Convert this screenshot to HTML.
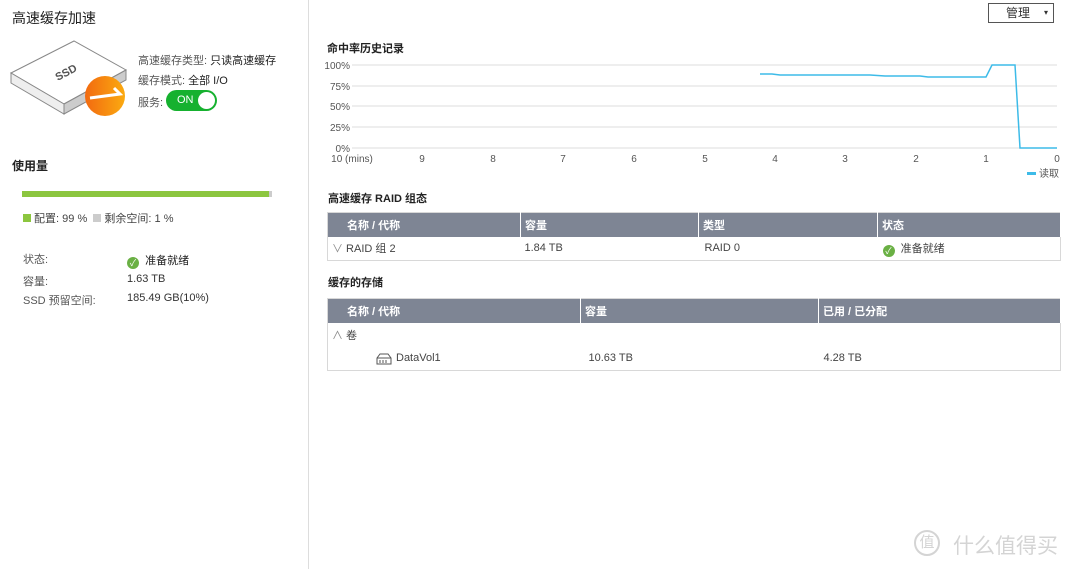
<!DOCTYPE html>
<html><head><meta charset="utf-8"><style>
*{margin:0;padding:0;box-sizing:border-box}
body{width:1080px;height:569px;background:#fff;font-family:"Liberation Sans","Noto Sans CJK SC",sans-serif;color:#333;position:relative;overflow:hidden;font-size:11px}
.a{position:absolute;white-space:nowrap}
table{position:absolute;border-collapse:collapse;left:327px;width:734px;border:1px solid #d8d8d8;table-layout:fixed}
th{background:#7e8594;color:#fff;text-align:left;font-weight:bold;height:24px;font-size:11px;border-right:1px solid #fff}
td{height:24px;font-size:11px;color:#444}
.ok{display:inline-block;width:12px;height:12px;border-radius:50%;background:#6ab044;color:#fff;font-size:9px;text-align:center;line-height:12px;vertical-align:-2px}
</style></head><body>
<div class="a" style="left:12px;top:8px;font-size:14px;color:#222">高速缓存加速</div>
<div class="a" style="left:988px;top:3px;width:66px;height:20px;border:1px solid #555;font-size:12px;line-height:18px;padding-left:17px">管理<span style="position:absolute;right:5px;top:0;font-size:8px;line-height:18px">▾</span></div>
<div class="a" style="left:308px;top:0;width:1px;height:569px;background:#ddd"></div>
<svg class="a" style="left:8px;top:38px" width="120" height="80" viewBox="0 0 120 80">
<polygon points="3,35 66,3 118,32 56,66" fill="#fff" stroke="#888"/>
<polygon points="3,35 56,66 56,76 3,45" fill="#eee" stroke="#888"/>
<polygon points="56,66 118,32 118,42 56,76" fill="#ccc" stroke="#888"/>
<text x="48" y="40" font-size="11" font-weight="bold" fill="#555" transform="rotate(-28 55 38)">SSD</text>
<defs><linearGradient id="g" x1="0" x2="1"><stop offset="0" stop-color="#f26a10"/><stop offset="1" stop-color="#fbaa10"/></linearGradient></defs>
<circle cx="97" cy="58" r="20" fill="url(#g)"/>
<path d="M82 60 L112 56 L106 50" stroke="#fff" stroke-width="3" fill="none"/>
</svg>
<div class="a" style="left:138px;top:52px;color:#555">高速缓存类型: <span style="color:#222">只读高速缓存</span></div>
<div class="a" style="left:138px;top:72px;color:#555">缓存模式: <span style="color:#222">全部 I/O</span></div>
<div class="a" style="left:138px;top:94px;color:#555">服务:</div>
<div class="a" style="left:166px;top:90px;width:51px;height:21px;border-radius:11px;background:#16b12f;color:#fff;font-size:11px;padding:4px 0 0 11px">ON<div style="position:absolute;right:2px;top:2px;width:17px;height:17px;border-radius:50%;background:#fff"></div></div>
<div class="a" style="left:12px;top:157px;font-weight:bold;font-size:12px;color:#222">使用量</div>
<div class="a" style="left:22px;top:191px;width:249px;height:6px;background:#8cc63f"></div>
<div class="a" style="left:269px;top:191px;width:3px;height:6px;background:#ccc"></div>
<div class="a" style="left:23px;top:210px;color:#444"><span style="display:inline-block;width:8px;height:8px;background:#8cc63f"></span> 配置: 99 % &nbsp;<span style="display:inline-block;width:8px;height:8px;background:#ccc"></span> 剩余空间: 1 %</div>
<div class="a" style="left:23px;top:251px;color:#555">状态:</div>
<div class="a" style="left:127px;top:252px;color:#222"><span class="ok">✓</span>&nbsp; 准备就绪</div>
<div class="a" style="left:23px;top:273px;color:#555">容量:</div><div class="a" style="left:127px;top:273px">1.63 TB</div>
<div class="a" style="left:23px;top:292px;color:#555">SSD 预留空间:</div><div class="a" style="left:127px;top:292px">185.49 GB(10%)</div>
<div class="a" style="left:327px;top:40px;font-weight:bold;color:#222">命中率历史记录</div>
<svg class="a" style="left:320px;top:55px" width="760" height="130">
<g stroke="#ddd"><line x1="32" x2="737" y1="10" y2="10"/><line x1="32" x2="737" y1="31" y2="31"/><line x1="32" x2="737" y1="51" y2="51"/><line x1="32" x2="737" y1="72" y2="72"/><line x1="32" x2="737" y1="93" y2="93"/></g>
<g font-size="10" fill="#555" text-anchor="end"><text x="30" y="14">100%</text><text x="30" y="35">75%</text><text x="30" y="55">50%</text><text x="30" y="76">25%</text><text x="30" y="97">0%</text></g>
<g font-size="10" fill="#555" text-anchor="middle"><text x="32" y="107">10 (mins)</text><text x="102" y="107">9</text><text x="173" y="107">8</text><text x="243" y="107">7</text><text x="314" y="107">6</text><text x="385" y="107">5</text><text x="455" y="107">4</text><text x="525" y="107">3</text><text x="596" y="107">2</text><text x="666" y="107">1</text><text x="737" y="107">0</text></g>
<polyline fill="none" stroke="#3dbbe8" stroke-width="1.5" points="440,19 452,19 460,20 550,20 565,21 600,21 608,22 666,22 672,10 695,10 700,93 737,93"/>
<rect x="707" y="117" width="9" height="3" fill="#3dbbe8"/><text x="719" y="122" font-size="10" fill="#555">读取</text>
</svg>
<div class="a" style="left:328px;top:190px;font-weight:bold;color:#222">高速缓存 RAID 组态</div>
<table style="top:212px"><colgroup><col style="width:193px"><col style="width:178px"><col style="width:179px"><col></colgroup>
<tr><th style="padding-left:19px">名称 / 代称</th><th style="padding-left:4px">容量</th><th style="padding-left:4px">类型</th><th style="padding-left:4px">状态</th></tr>
<tr><td style="padding-left:4px"><span style="color:#888">∨</span> RAID 组 2</td><td style="padding-left:4px">1.84 TB</td><td style="padding-left:6px">RAID 0</td><td style="padding-left:5px"><span class="ok">✓</span> &nbsp;准备就绪</td></tr></table>
<div class="a" style="left:328px;top:274px;font-weight:bold;color:#222">缓存的存储</div>
<table style="top:298px"><colgroup><col style="width:253px"><col style="width:238px"><col></colgroup>
<tr><th style="padding-left:19px">名称 / 代称</th><th style="padding-left:4px">容量</th><th style="padding-left:4px">已用 / 已分配</th></tr>
<tr><td colspan="3" style="padding-left:4px"><span style="color:#888">∧</span> 卷</td></tr>
<tr><td style="padding-left:68px">DataVol1</td><td style="padding-left:8px">10.63 TB</td><td style="padding-left:5px">4.28 TB</td></tr></table>
<svg class="a" style="left:376px;top:353px" width="16" height="12"><path d="M1 5 L4 1 H12 L15 5 V11 H1 Z M1 5 H15" fill="none" stroke="#555"/><path d="M4 7v3M7 7v3M10 7v3" stroke="#555"/></svg>
<div class="a" style="left:914px;top:530px;width:26px;height:26px;border:2px solid #d4d4d4;border-radius:50%;color:#d4d4d4;font-size:15px;text-align:center;line-height:22px">值</div>
<div class="a" style="left:953px;top:530px;color:#d4d4d4;font-size:21px">什么值得买</div>
</body></html>
